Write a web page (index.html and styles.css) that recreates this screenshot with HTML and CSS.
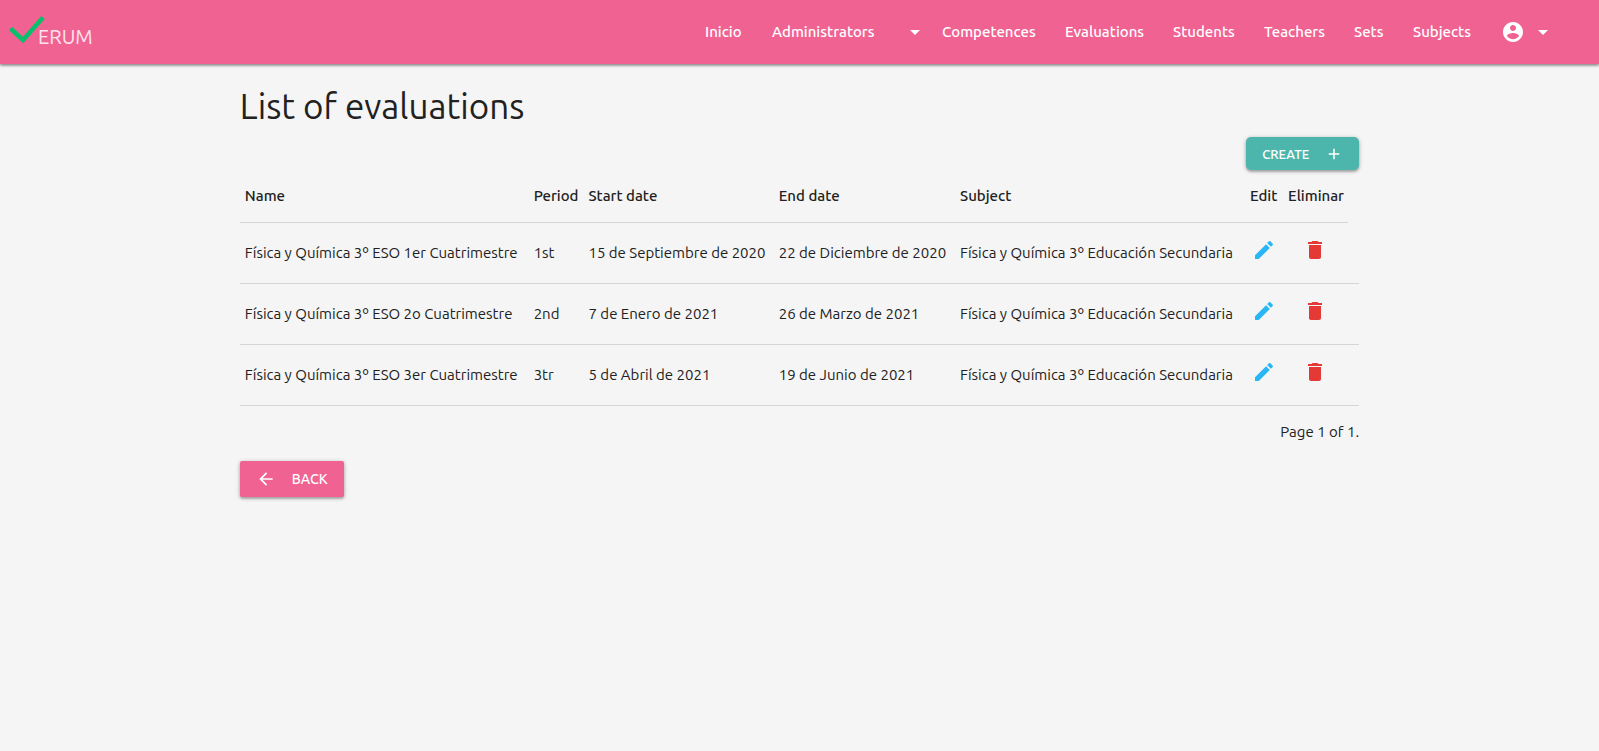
FILE: index.html
```
<!DOCTYPE html>
<html lang="es">
<head>
<meta charset="utf-8">
<meta name="viewport" content="width=device-width, initial-scale=1">
<title>List of evaluations</title>
<link rel="stylesheet" href="styles.css">
</head>
<body>
<svg width="0" height="0" class="sprite" aria-hidden="true">
  <symbol id="caret" viewBox="0 0 24 24"><path d="M7 10l5 5 5-5z"/></symbol>
  <symbol id="edit" viewBox="0 0 24 24"><path d="M3 17.25V21h3.75L17.81 9.94l-3.75-3.75L3 17.25zM20.71 7.04a1 1 0 0 0 0-1.41l-2.34-2.34a1 1 0 0 0-1.41 0l-1.83 1.83 3.75 3.75 1.83-1.83z"/></symbol>
  <symbol id="trash" viewBox="0 0 24 24"><path d="M6 19c0 1.1.9 2 2 2h8c1.100 0 2-.9 2-2V7H6v12zM19 4h-3.500l-1-1h-5l-1 1H5v2h14V4z"/></symbol>
</svg>
<header class="topbar">
  <a class="brand" href="#" aria-label="Verum">
    <svg class="check" viewBox="0 0 36 28" aria-hidden="true"><path d="M1.500 12.500L14 24 34 1.500" fill="none" stroke="#0abf6c" stroke-width="4.500"/></svg>
    <span class="brand-text">ERUM</span>
  </a>
  <nav class="menu">
    <a href="#">Inicio</a>
    <a href="#" class="dropdown">Administrators <svg class="icon"><use href="#caret"/></svg></a>
    <a href="#">Competences</a>
    <a href="#">Evaluations</a>
    <a href="#">Students</a>
    <a href="#">Teachers</a>
    <a href="#">Sets</a>
    <a href="#">Subjects</a>
    <a href="#" class="account" aria-label="Account">
      <svg class="icon" viewBox="0 0 24 24"><path d="M12 2C6.480 2 2 6.480 2 12s4.480 10 10 10 10-4.480 10-10S17.520 2 12 2zm0 3c1.660 0 3 1.340 3 3s-1.340 3-3 3-3-1.340-3-3 1.340-3 3-3zm0 14.200c-2.500 0-4.710-1.280-6-3.220.03-1.990 4-3.080 6-3.080 1.990 0 5.970 1.090 6 3.080-1.290 1.940-3.500 3.220-6 3.220z"/></svg>
      <svg class="icon"><use href="#caret"/></svg>
    </a>
  </nav>
</header>
<main class="container">
  <h1>List of evaluations</h1>
  <div class="actions">
    <button type="button" class="btn create">CREATE
      <svg class="btn-icon" viewBox="0 0 24 24" aria-hidden="true"><path d="M19 13h-6v6h-2v-6H5v-2h6V5h2v6h6v2z"/></svg>
    </button>
  </div>
  <table>
    <colgroup><col class="c-name"><col class="c-period"><col class="c-start"><col class="c-end"><col class="c-subject"><col class="c-edit"><col class="c-delete"><col class="c-rest"></colgroup>
    <thead>
      <tr><th>Name</th><th>Period</th><th>Start date</th><th>End date</th><th>Subject</th><th>Edit</th><th>Eliminar</th></tr>
    </thead>
    <tbody>
      <tr><td>Física y Química 3º ESO 1er Cuatrimestre</td><td>1st</td><td>15 de Septiembre de 2020</td><td>22 de Diciembre de 2020</td><td>Física y Química 3º Educación Secundaria</td><td class="center"><a class="edit" href="#" aria-label="Edit"><svg class="icon"><use href="#edit"/></svg></a></td><td class="center"><a class="delete" href="#" aria-label="Eliminar"><svg class="icon"><use href="#trash"/></svg></a></td><td></td></tr>
      <tr><td>Física y Química 3º ESO 2o Cuatrimestre</td><td>2nd</td><td>7 de Enero de 2021</td><td>26 de Marzo de 2021</td><td>Física y Química 3º Educación Secundaria</td><td class="center"><a class="edit" href="#" aria-label="Edit"><svg class="icon"><use href="#edit"/></svg></a></td><td class="center"><a class="delete" href="#" aria-label="Eliminar"><svg class="icon"><use href="#trash"/></svg></a></td><td></td></tr>
      <tr><td>Física y Química 3º ESO 3er Cuatrimestre</td><td>3tr</td><td>5 de Abril de 2021</td><td>19 de Junio de 2021</td><td>Física y Química 3º Educación Secundaria</td><td class="center"><a class="edit" href="#" aria-label="Edit"><svg class="icon"><use href="#edit"/></svg></a></td><td class="center"><a class="delete" href="#" aria-label="Eliminar"><svg class="icon"><use href="#trash"/></svg></a></td><td></td></tr>
    </tbody>
  </table>
  <p class="pages">Page 1 of 1.</p>
  <button type="button" class="btn back">
    <svg class="btn-icon" viewBox="0 0 24 24" aria-hidden="true"><path d="M20 11H7.830l5.590-5.590L12 4l-8 8 8 8 1.410-1.410L7.830 13H20v-2z"/></svg>
    BACK</button>
</main>
</body>
</html>
```

FILE: styles.css
```
* { box-sizing: border-box; }

body {
  min-height: 100vh;
  margin: 0;
  background: #f5f5f5;
  color: #212121;
  font: 15px/22px Ubuntu, "Noto Sans", "Open Sans", sans-serif;
}

a { color: inherit; text-decoration: none; }
.sprite { display: block; height: 0; }
.icon { display: block; flex: none; width: 24px; height: 24px; fill: currentColor; }

.topbar {
  display: flex;
  justify-content: space-between;
  height: 64px;
  background: #f06292;
  color: #fff;
  box-shadow: 0 2px 2px rgba(0, 0, 0, .16), 0 1px 3px rgba(0, 0, 0, .4);
}

.brand { display: flex; align-items: flex-start; padding: 16px 0 0 9px; }
.check { width: 36px; height: 28px; }
.brand-text { margin: 8px 0 0 -7px; color: #ffe4ee; font-size: 20px; line-height: 26px; }

.menu {
  display: grid;
  grid-template-columns: 67px 170px 123px 108px 91px 90px 59px 90px 111px;
  font-weight: 500;
}
.menu a { display: flex; align-items: center; padding-left: 15px; }
.menu .dropdown { justify-content: space-between; }
.menu .account { gap: 6px; padding-left: 13px; }

.container { width: 70%; margin: 0 auto; padding: 20px 0; }

h1 { margin: 0; font-size: 35px; line-height: 44px; font-weight: 400; }

.actions { display: flex; justify-content: flex-end; padding: 9px 0 4px; }

.btn {
  display: flex;
  align-items: center;
  border: 0;
  color: #fff;
  font-family: inherit;
  font-weight: 500;
  box-shadow: 0 2px 2px rgba(0, 0, 0, .16), 0 1px 4px rgba(0, 0, 0, .3);
  cursor: pointer;
}
.btn-icon { width: 18px; height: 18px; fill: currentColor; }
.create { gap: 16px; height: 33px; padding: 0 16px; border-radius: 5px; background: #4db6ac; font-size: 13px; }
.back { gap: 16px; height: 36px; padding: 0 16px; border-radius: 2px; background: #f06292; font-size: 14px; }
.back .btn-icon { width: 20px; height: 20px; }

table { width: 100%; border-collapse: collapse; table-layout: fixed; }
th, td { padding: 0 5px; text-align: left; white-space: nowrap; border-bottom: 1px solid #d5d5d5; }
th { height: 48px; padding-bottom: 4px; font-weight: 500; }
td { height: 61px; }
td .icon { margin-bottom: 6px; }
.center .icon { margin-left: auto; margin-right: auto; }
.edit { color: #29b6f6; }
.delete { color: #e53935; }
.c-name { width: 25.8%; }
.c-period { width: 4.900%; }
.c-start { width: 17%; }
.c-end { width: 16.200%; }
.c-subject { width: 25.900%; }
.c-edit { width: 3.400%; }
.c-delete { width: 5.800%; }
.c-rest { width: 1%; }

.pages { margin: 15px 0 18px; text-align: right; }
```
